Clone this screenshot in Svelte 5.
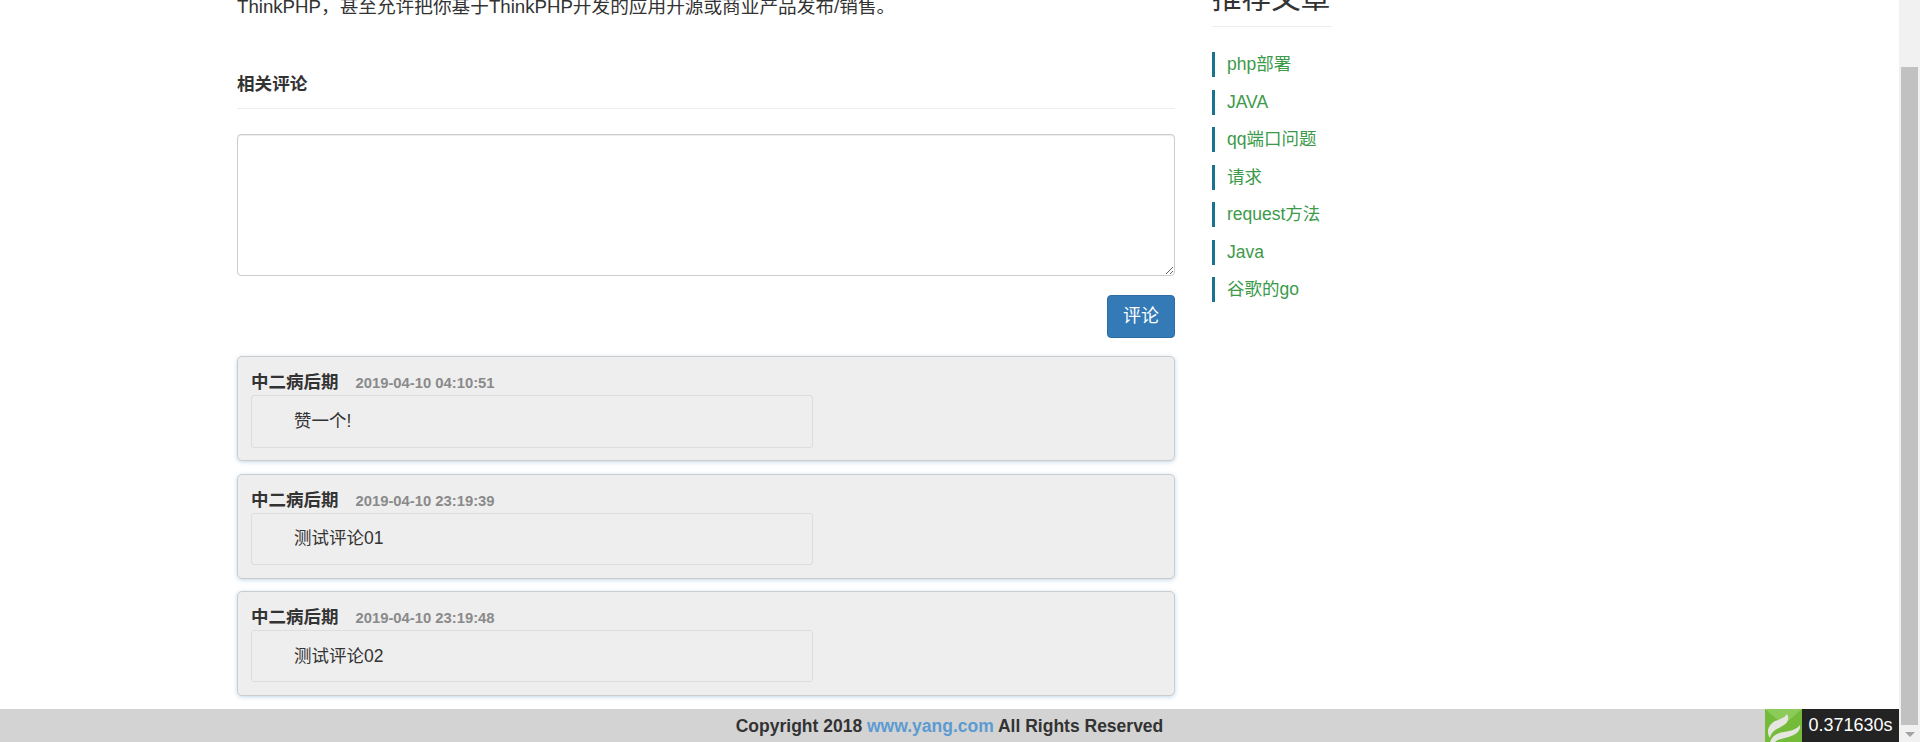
<script>
  const links = ['php部署', 'JAVA', 'qq端口问题', '请求', 'request方法', 'Java', '谷歌的go'];
  const comments = [
    { time: '2019-04-10 04:10:51', text: '赞一个!', h: 'tall' },
    { time: '2019-04-10 23:19:39', text: '测试评论01', h: '' },
    { time: '2019-04-10 23:19:48', text: '测试评论02', h: '' }
  ];
</script>

<div class="window">
  <div class="viewport">
    <div class="scrolled">
      <main class="main">
        <p class="intro">ThinkPHP，甚至允许把你基于ThinkPHP开发的应用开源或商业产品发布/销售。</p>
        <h4 class="section">相关评论</h4>
        <textarea class="box"></textarea>
        <div class="actions"><button class="btn">评论</button></div>
        {#each comments as c}
          <section class="card">
            <div class="meta"><strong class="author">中二病后期</strong><span class="time">{c.time}</span></div>
            <div class="well {c.h}"><p>{c.text}</p></div>
          </section>
        {/each}
      </main>
      <aside class="side">
        <h3 class="side-title">推荐文章</h3>
        <ul>
          {#each links as l}
            <li><a href="#top">{l}</a></li>
          {/each}
        </ul>
      </aside>
    </div>
    <footer class="footer">
      <span>Copyright 2018 <a href="#top">www.yang.com</a> All Rights Reserved</span>
      <div class="trace">
        <div class="logo">
          <svg width="37" height="33" viewBox="0 0 37 33">
            <rect width="37" height="33" fill="#74bb3a" />
            <path d="M0 0H37L18.5 16Z" fill="#8ccb5a" />
            <path d="M22 5C26 12 20 16 14 19C9 21 6 24 5 29C1 23 3 16 10 12C15 10 20 9 22 5Z" fill="#e6e6e0" />
            <path d="M35 16C36 24 28 27 20 29C15 30 12 31 10 33H5C7 27 12 24 19 23C26 22 32 20 35 16Z" fill="#e6e6e0" />
          </svg>
        </div>
        <div class="time-box">0.371630s</div>
      </div>
    </footer>
  </div>
  <div class="scrollbar">
    <div class="thumb"></div>
    <div class="arrow"></div>
  </div>
</div>

<style>
  :global(body) {
    margin: 0;
    background: #fff;
  }
  .window {
    display: flex;
    height: 742px;
    overflow: hidden;
    font-family: "Liberation Sans", "Noto Sans CJK SC", sans-serif;
    font-size: 16px;
    line-height: 1.42857;
    color: #333;
  }
  .viewport {
    flex: 1;
    min-width: 0;
    display: flex;
    flex-direction: column;
  }
  .scrolled {
    flex: 1;
    min-height: 0;
    display: flex;
    align-items: flex-start;
    padding-left: 237px;
    overflow: hidden;
  }
  .main {
    width: 938px;
    flex: none;
    margin-top: -7px;
  }
  .intro {
    margin: 0;
    height: 27px;
    line-height: 27px;
    font-size: 18.67px;
    white-space: nowrap;
  }
  .section {
    margin: 53px 0 0;
    font-size: 17.6px;
    line-height: 23px;
    font-weight: 700;
    height: 35px;
    border-bottom: 1px solid #eee;
    box-sizing: content-box;
  }
  .box {
    display: block;
    box-sizing: border-box;
    width: 100%;
    height: 142px;
    margin: 25px 0 0;
    border: 1px solid #ccc;
    border-radius: 4px;
    box-shadow: inset 0 1px 1px rgba(0, 0, 0, 0.075);
    background: #fff;
    padding: 6px 12px;
    outline: none;
  }
  .actions {
    display: flex;
    justify-content: flex-end;
    margin-top: 19px;
  }
  .btn {
    width: 68px;
    height: 43px;
    padding: 0;
    border: 1px solid #2e6da4;
    border-radius: 4px;
    background: #337ab7;
    color: #fff;
    font: inherit;
    font-size: 18px;
  }
  .card {
    box-sizing: border-box;
    margin-top: 12.5px;
    height: 105px;
    padding: 13px 13px 0;
    background: #eee;
    border: 1px solid #ccc;
    border-radius: 5px;
    box-shadow: 0 1px 4px rgba(51, 122, 183, 0.3);
  }
  .actions + .card {
    margin-top: 18px;
  }
  .meta {
    display: flex;
    align-items: baseline;
    height: 25px;
    line-height: 25px;
  }
  .author {
    font-size: 17.5px;
    font-weight: 700;
    color: #333;
  }
  .time {
    margin-left: 17px;
    font-size: 14.8px;
    font-weight: 700;
    color: #8a8a8a;
  }
  .well {
    box-sizing: border-box;
    width: 562px;
    height: 52px;
    border: 1px solid #ddd;
    border-radius: 3px;
    padding: 13.5px 42px 0;
  }
  .well p {
    margin: 0;
    line-height: 23px;
    font-size: 17.5px;
  }
  .well.tall {
    height: 53px;
  }
  .side {
    width: 120px;
    flex: none;
    margin-left: 37px;
    margin-top: -19px;
  }
  .side-title {
    margin: 0;
    font-size: 29.6px;
    font-weight: 400;
    line-height: 34px;
    height: 45px;
    border-bottom: 1px solid #eee;
    color: #333;
    box-sizing: content-box;
    white-space: nowrap;
  }
  .side ul {
    list-style: none;
    margin: 25px 0 0;
    padding: 0;
  }
  .side li {
    box-sizing: border-box;
    height: 25px;
    margin-bottom: 12.5px;
    border-left: 3px solid #1a7190;
    padding-left: 12px;
    line-height: 24px;
    font-size: 17.5px;
  }
  .side a {
    color: #3c9a4a;
    text-decoration: none;
  }
  .footer {
    position: relative;
    flex: none;
    box-sizing: border-box;
    height: 33px;
    padding-top: 2px;
    background: #d3d3d3;
    display: flex;
    align-items: center;
    justify-content: center;
    font-size: 17.5px;
    font-weight: 700;
    color: #333;
  }
  .footer a {
    color: #5b9bd1;
    text-decoration: none;
  }
  .trace {
    position: absolute;
    right: 0;
    top: 0;
    display: flex;
    height: 33px;
  }
  .logo {
    width: 37px;
    height: 33px;
    overflow: hidden;
  }
  .logo svg {
    display: block;
  }
  .time-box {
    width: 97px;
    background: #232323;
    color: #fff;
    font-weight: 400;
    font-size: 18px;
    line-height: 33px;
    text-align: center;
  }
  .scrollbar {
    position: relative;
    flex: none;
    width: 21px;
    background: #f1f1f1;
  }
  .thumb {
    position: absolute;
    left: 2px;
    right: 2px;
    top: 67px;
    bottom: 17px;
    background: #c1c1c1;
  }
  .arrow {
    position: absolute;
    left: 6px;
    bottom: 5px;
    width: 0;
    height: 0;
    border-left: 5px solid transparent;
    border-right: 5px solid transparent;
    border-top: 5px solid #a3a3a3;
  }
</style>
